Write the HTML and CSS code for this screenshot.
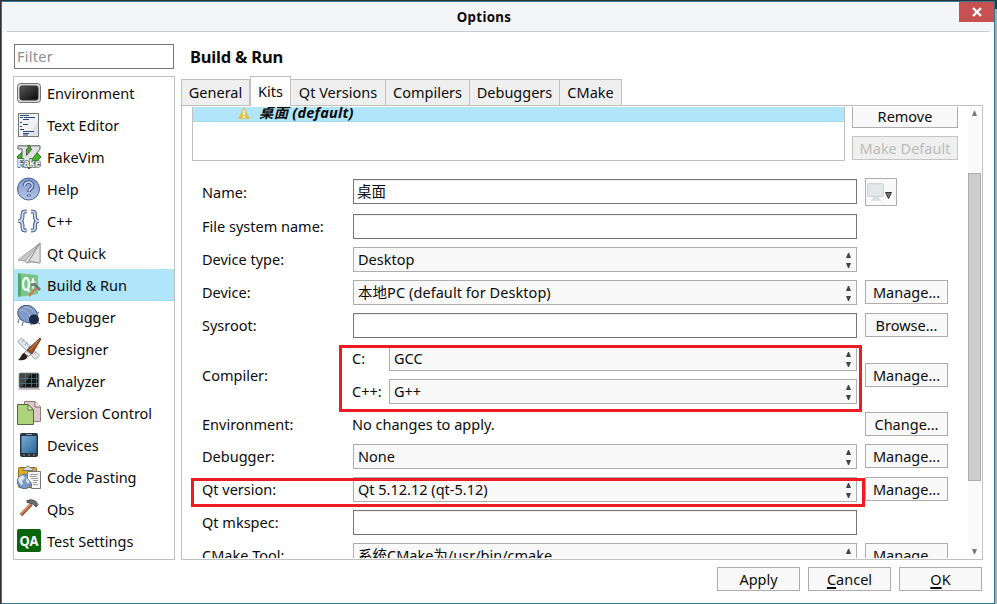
FILE: index.html
```html
<!DOCTYPE html>
<html lang="en">
<head>
<meta charset="utf-8">
<title>Options</title>
<link rel="stylesheet" href="styles.css">
</head>
<body>
<div class="window">
  <header class="titlebar">
    <h1 class="title">Options</h1>
    <button class="close" aria-label="Close"><svg width="10" height="10" viewBox="0 0 10 10"><path d="M1 1L9 9M9 1L1 9" stroke="#fff" stroke-width="2.4"/></svg></button>
  </header>
  <main class="content">
    <aside class="sidebar">
      <input class="filter" placeholder="Filter" aria-label="Filter">
      <ul class="categories">
        <li><svg viewBox="0 0 24 24"><defs><linearGradient id="scr" x1="0" y1="0" x2="1" y2="1"><stop offset="0" stop-color="#5a5a5a"/><stop offset=".5" stop-color="#303030"/><stop offset="1" stop-color="#080808"/></linearGradient></defs><rect x=".5" y="2.500" width="23" height="19" rx="3" fill="#d6d6d6" stroke="#747474"/><rect x="3" y="5" width="18" height="14" rx="2" fill="url(#scr)" stroke="#333"/></svg><span>Environment</span></li>
        <li><svg viewBox="0 0 24 24"><rect x="1.500" y=".5" width="20" height="23" fill="#eff1f2" stroke="#777"/><path d="M12 23L21 8V23z" fill="#dfe1e3"/><path d="M3 2.500h9M3 4.500h3M7 4.500h11M6 6.500h6M3 9.500h2M6 11.500h5M3 13.500h2M3 16.500h4M6 18.500h11M6 20.500h6M6 22h5" stroke="#29487e"/></svg><span>Text Editor</span></li>
        <li><svg viewBox="0 0 24 24"><path d="M12 0L24 12 12 24 0 12z" fill="#3bb822" stroke="#247717"/><path d="M1 .8h10v3.200H9.500v6.500L15 4h-1.500V.8H23V4L9 22H5V4H1z" fill="#dfe2e0" stroke="#5a5d5a"/><text x=".5" y="22" textLength="23" lengthAdjust="spacingAndGlyphs" class="fake">Fake</text></svg><span>FakeVim</span></li>
        <li><svg viewBox="0 0 24 24"><defs><linearGradient id="help" x1="0" y1="0" x2="0" y2="1"><stop offset="0" stop-color="#7f9bd1"/><stop offset="1" stop-color="#b4c4e6"/></linearGradient></defs><circle cx="11.500" cy="12" r="11" fill="url(#help)" stroke="#47618c"/><path d="M7.500 9C7.500 3.500 16 4 15.500 9c-.3 2.600-3.500 3-3.500 6M11.800 17.500v2" fill="none" stroke="#344e7c" stroke-width="3.600"/><path d="M7.500 9C7.500 3.500 16 4 15.500 9c-.3 2.600-3.500 3-3.500 5.500M11.800 17.700v1.500" fill="none" stroke="#c4d1e9" stroke-width="1.800"/></svg><span>Help</span></li>
        <li><svg viewBox="0 0 24 24"><g fill="none"><path id="braces" d="M9.500 2.500H8C5 2.500 5.500 5 5.500 8c0 2.500-1 4-4 4 3 0 4 1.500 4 4 0 3-.5 5.500 2.500 5.500h1.500M14 2.500h1.500c3 0 2.500 2.500 2.500 5.500 0 2.500 1 4 4 4-3 0-4 1.500-4 4 0 3 .5 5.500-2.500 5.500H14" stroke="#526a90" stroke-width="3.600"/><use href="#braces" class="brace-core"/><path d="M9.500 2.500H8C5 2.500 5.500 5 5.500 8c0 2.500-1 4-4 4 3 0 4 1.500 4 4 0 3-.5 5.500 2.500 5.500h1.500M14 2.500h1.500c3 0 2.500 2.500 2.500 5.500 0 2.500 1 4 4 4-3 0-4 1.500-4 4 0 3 .5 5.500-2.500 5.500H14" stroke="#d3e0f3" stroke-width="1.700"/></g></svg><span>C++</span></li>
        <li><svg viewBox="0 0 24 24"><path d="M23 2L1 19l7 1 2 2 4-1 9 1z" fill="#c9c9c9" stroke="#8e8e8e" stroke-width=".8"/><path d="M23 2L8 20l2 2 2-2zM12 20L23 2v20z" fill="#dfdfdf" stroke="#8d8d8d" stroke-width=".7"/></svg><span>Qt Quick</span></li>
        <li class="selected"><svg viewBox="0 0 24 24"><path d="M1 0l20 2v19L1 24z" fill="#7bc58b"/><path d="M1 0l3 2v20l-3 2z" fill="#51a865"/><ellipse cx="9" cy="11" rx="3" ry="6" fill="none" stroke="#f0fff2" stroke-width="2.300"/><path d="M10 15.500l2.500 3.500M16 5v9q0 1.500 1.500 1.500M14 9h4.500" fill="none" stroke="#f0fff2" stroke-width="1.900"/><path d="M12 23l8-9" stroke="#c77f58" stroke-width="2.600"/><path d="M14 12.500l3.500-1.500 5.500 6" fill="none" stroke="#6f7975" stroke-width="2.600"/></svg><span>Build &amp; Run</span></li>
        <li><svg viewBox="0 0 24 24"><path d="M2 14l-1 4M6 17l-1 4M20 9l2-2M20 17l3 2M13 18l2 2" stroke="#7b8190" stroke-width="1.200"/><ellipse cx="10.500" cy="9" rx="10" ry="8.300" transform="rotate(24 10.500 9)" fill="#7f99c8" stroke="#40567e"/><path d="M2 5q9-1 12 8M7 2q9 1 12 7" fill="none" stroke="#a9bbdc"/><circle cx="17" cy="14.500" r="5" fill="#1f2c47"/></svg><span>Debugger</span></li>
        <li><svg viewBox="0 0 24 24"><path d="M.5 4.500l4-3.500 18 17-4 4.500z" fill="#dee6eb" stroke="#9eacb5"/><path d="M5 5l2-2M8 8l2-2M11 11l2-2M17 17l2-2" stroke="#8b9ba8"/><path d="M23 1l1 1-9 15-5-4z" fill="#9b4f25" stroke="#5f2d12" stroke-width=".8"/><path d="M22 3l-9 10" stroke="#d48a58"/><path d="M14 17l-4.500-3.500-2.500 3 4.500 3z" fill="#e4e4e4" stroke="#666" stroke-width=".8"/><path d="M7 16c-3 1-3 5-6 7 5 1 9 0 9.500-4z" fill="#2b211c"/></svg><span>Designer</span></li>
        <li><svg viewBox="0 0 24 24"><path d="M2 18l20 0 1 3H1z" fill="#c4c4c4"/><rect x="2" y="4" width="20" height="15" rx="1.500" fill="#10171a" stroke="#a8a8a8"/><path d="M3 5h11L5 18H3z" fill="#424749"/><path d="M8.500 5v13M14.500 5v13M3 9.500h18M3 14.500h18M19.500 5v13" stroke="#56808a" stroke-width=".7"/></svg><span>Analyzer</span></li>
        <li><svg viewBox="0 0 24 24"><path d="M7.500.5H18l5.500 5.500v14.500h-16z" fill="#ddc7ca" stroke="#8d7b7d"/><path d="M18 .5V6h5.500" fill="#f6eeee" stroke="#806e70"/><path d="M.5 3.500H11l5.500 5.500v14.500H.5z" fill="#add27c" stroke="#536b3b"/><path d="M11 3.500V9h5.500z" fill="#e7f5d2" stroke="#526a3a"/></svg><span>Version Control</span></li>
        <li><svg viewBox="0 0 24 24"><defs><linearGradient id="dev" x1="0" y1="0" x2="1" y2="1"><stop offset="0" stop-color="#75add5"/><stop offset="1" stop-color="#2c649a"/></linearGradient></defs><rect x="3" y="0" width="18" height="24" rx="2" fill="#2b3540"/><rect x="4.500" y="3" width="15" height="17" fill="url(#dev)"/><path d="M9 1.500h6M6 22h2M11 22h2M16 22h2" stroke="#929ca5"/></svg><span>Devices</span></li>
        <li><svg viewBox="0 0 24 24"><rect x="1.500" y="2.500" width="18" height="20" rx="1" fill="#dcae20" stroke="#8d6c13"/><path d="M4 9h13v11H4z" fill="#f3f4f6"/><path d="M6 5.500V3h2.500q2.500-4 5 0H16v2.500z" fill="#ddd" stroke="#777"/><circle cx="7.500" cy="16.500" r="7.200" fill="#7799c6" stroke="#526d97"/><path d="M2 12l4-2 2 3-3 3 1 3-2 1-3-5zM10 11l4 3-3 5-2-3z" fill="#dce7f2"/><path d="M10.500 6.500h13v17h-9v-5l-4-5z" fill="#f4f4f4" stroke="#777"/><path d="M13 9.500h8M13 11.500h7M14 13.500h7M16 15.500h5M16 17.500h4M16 19.500h5" stroke="#888" stroke-width=".8"/></svg><span>Code Pasting</span></li>
        <li><svg viewBox="0 0 24 24"><path d="M4 18L14.500 7" stroke="#9a5c34" stroke-width="3.500"/><path d="M4 17L14.500 6" stroke="#dd9360" stroke-width="1.500"/><path d="M10 3.500q5-2 9 1l2 3-2 2.500-3-3-3-1-3-.500z" fill="#697070" stroke="#303838" stroke-width=".8"/></svg><span>Qbs</span></li>
        <li><svg viewBox="0 0 24 24"><rect x="0" y="0" width="24" height="23" rx="2" fill="#07650c"/><text x="2.500" y="16.500" textLength="19" lengthAdjust="spacingAndGlyphs" class="qa">QA</text></svg><span>Test Settings</span></li>
      </ul>
    </aside>
    <section class="page">
      <h2 class="heading">Build &amp; Run</h2>
      <nav class="tabs">
        <span class="tab general">General</span><span class="tab active">Kits</span><span class="tab versions">Qt Versions</span><span class="tab compilers">Compilers</span><span class="tab debuggers">Debuggers</span><span class="tab cmake">CMake</span>
      </nav>
      <div class="panel">
        <div class="viewport">
          <div class="kits">
            <div class="tree"><div class="kit"><svg width="12" height="12" viewBox="0 0 12 12"><path d="M6 0L12 12H0z" fill="#e1c456"/><path d="M6 3.500v4.500M6 9v2" stroke="#fff" stroke-width="1.600"/></svg><span>桌面 (default)</span></div></div>
            <div class="kit-actions"><button class="btn remove">Remove</button><button class="btn" disabled>Make Default</button></div>
          </div>
          <div class="form">
            <label class="name-label">Name:</label><div class="input named">桌面</div><button class="icon-btn" aria-label="Kit icon"><svg width="28" height="24" viewBox="0 0 28 24"><rect x="1.500" y="3.500" width="16" height="13" rx="1" fill="#dfe2e2" stroke="#d4d7d7"/><path d="M3 5h13v10H3z" fill="#e5e8e8"/><path d="M7 17h6l2 4H5z" fill="#dfe1e1"/><path d="M19.500 12.500h6l-3 6z" fill="#777" stroke="#333"/></svg></button>
            <label>File system name:</label><div class="input"></div><i></i>
            <label>Device type:</label><div class="combo"><span>Desktop</span><b class="spin"></b></div><i></i>
            <label>Device:</label><div class="combo"><span class="device">本地PC (default for Desktop)</span><b class="spin"></b></div><button class="btn">Manage...</button>
            <label>Sysroot:</label><div class="input"></div><button class="btn">Browse...</button>
            <label class="mid">Compiler:</label>
            <div class="compiler"><label>C:</label><div class="combo"><span>GCC</span><b class="spin"></b></div><label>C++:</label><div class="combo"><span>G++</span><b class="spin"></b></div></div>
            <button class="btn mid">Manage...</button>
            <label>Environment:</label><span class="value">No changes to apply.</span><button class="btn">Change...</button>
            <label>Debugger:</label><div class="combo"><span>None</span><b class="spin"></b></div><button class="btn">Manage...</button>
            <label>Qt version:</label><div class="combo"><span>Qt 5.12.12 (qt-5.12)</span><b class="spin"></b></div><button class="btn">Manage...</button>
            <label>Qt mkspec:</label><div class="input"></div><i></i>
            <label>CMake Tool:</label><div class="combo"><span>系统CMake为/usr/bin/cmake</span><b class="spin"></b></div><button class="btn">Manage...</button>
          </div>
        </div>
        <div class="scrollbar"><b class="arrow up"></b><div class="track"><div class="thumb"></div></div><b class="arrow down"></b></div>
      </div>
    </section>
  </main>
  <footer class="actions"><button class="btn">Apply</button><button class="btn"><u>C</u>ancel</button><button class="btn"><u>O</u>K</button></footer>
  <div class="mark mark-compiler"></div>
  <div class="mark mark-version"></div>
</div>
</body>
</html>
```
FILE: styles.css
```css
* { box-sizing: border-box; }
body {
  margin: 0; width: 997px; height: 604px; overflow: hidden;
  padding: 1px 2px 0 1px;
  background: linear-gradient(#333 9px, #aaa 9px) right / 2px 100% no-repeat, #303336;
  font: 14.5px/20px "Noto Sans", "Noto Sans CJK SC", sans-serif; color: #0c0c0c;
}
h1, h2, ul { margin: 0; padding: 0; }
button, input { font: inherit; color: inherit; border-radius: 0; margin: 0; padding: 0; }
.window { position: relative; width: 994px; height: 603px; border: 1px solid #317797; background: #fff; }
.titlebar { display: flex; height: 30px; background: linear-gradient(#c8c9cc, #c8c9cc) 5px 29px / 982px 1px no-repeat #f4f5f8; }
.title { flex: 1; padding-left: 7px; text-align: center; font-size: 13.3px; line-height: 31px; font-weight: 700; letter-spacing: .3px; }
.close { width: 35px; height: 20px; border: 0; background: #c75050; display: flex; align-items: center; justify-content: center; }
.content { display: flex; gap: 6px; height: 528px; padding: 12px 0 0 11px; }
.sidebar { width: 162px; }
.filter { display: block; width: 160px; height: 25px; margin-left: 1px; border: 1px solid #777; padding: 0 2px 2px; outline: 0; background: #fff; letter-spacing: .25px; }
.filter::placeholder { color: #8e8e8e; opacity: 1; }
.categories { margin-top: 7px; height: 484px; border: 1px solid #c0c0c0; list-style: none; }
.categories li { display: flex; align-items: center; height: 32px; padding-left: 3px; gap: 6px; }
.categories li.selected { background: #b0e5fa; border-bottom: 1px solid #9edcf5; }
.categories svg { width: 24px; height: 24px; flex: none; }
.fake { font: 700 10px "Liberation Sans", sans-serif; fill: #fff; stroke: #555; stroke-width: 1.3px; paint-order: stroke; }
.qa { font: 700 15px "Noto Sans", sans-serif; fill: #fff; }
.page { width: 802px; }
.heading { height: 32px; padding-left: 9px; font-size: 16.5px; line-height: 26px; letter-spacing: -.2px; }
.tabs { display: flex; align-items: flex-end; height: 29px; }
.tab { height: 26px; border: 1px solid #c0c0c0; border-left: 0; border-bottom: 0; background: #efefef; text-align: center; line-height: 25px; white-space: nowrap; }
.general { width: 69px; border-left: 1px solid #c0c0c0; }
.active { width: 41px; height: 30px; margin-bottom: -1px; border-left: 1px solid #c0c0c0; background: #fff; line-height: 28px; position: relative; }
.versions { width: 95px; }
.compilers { width: 84px; }
.debuggers { width: 90px; }
.cmake { width: 62px; }
.panel { display: flex; height: 455px; border: 1px solid #c0c0c0; padding: 1px; }
.viewport { width: 785px; height: 451px; overflow: hidden; }
.kits { display: flex; gap: 7px; height: 71px; padding-left: 9px; }
.tree { width: 653px; height: 54px; border: 1px solid #c0c0c0; border-top: 0; }
.kit { display: flex; align-items: flex-start; gap: 9px; height: 15px; padding-left: 45px; background: #b0e5fa; border-bottom: 1px solid #9edcf5; font-weight: 700; font-style: italic; line-height: 10px; }
.kit span { letter-spacing: .2px; }
.kit-actions { width: 106px; display: flex; flex-direction: column; gap: 8px; }
.btn { height: 24px; border: 1px solid #adadad; background: #f9f9f9; text-align: center; line-height: 22px; white-space: nowrap; }
.btn:disabled { border-color: #c6c6c6; background: #efefef; color: #bcbcbc; }
.remove { height: 21px; border-top: 0; padding-bottom: 2px; line-height: 18px; }
.form { display: grid; grid-template-columns: 143px 504px 83px; gap: 8px; padding-left: 19px; line-height: 25px; }
.form label { white-space: nowrap; }
.form .name-label { padding-top: 2px; height: 28px; }
.input { height: 25px; border: 1px solid #767676; background: #fff; padding-left: 3px; line-height: 23px; box-shadow: inset 0 1px #eee; }
.named { margin-top: 1px; }
.icon-btn { width: 32px; height: 28px; border: 1px solid #adadad; background: #f9f9f9; }
.icon-btn svg { display: block; }
.combo { display: flex; justify-content: space-between; height: 25px; border: 1px solid #adadad; background: #f9f9f9; padding: 0 5px 0 4px; line-height: 22px; }
.device { letter-spacing: .06px; }
.spin { width: 7px; height: 23px; padding-top: 5px; display: flex; flex-direction: column; gap: 5px; }
.spin::before, .spin::after { content: ""; width: 5px; height: 5px; background: #444; clip-path: polygon(40% 0, 60% 0, 100% 100%, 0 100%); }
.spin::after { clip-path: polygon(0 0, 100% 0, 60% 100%, 40% 100%); }
.combo .spin { width: 5px; }
.mid { align-self: center; }
.compiler { display: grid; grid-template-columns: 28px 1fr; gap: 8px; line-height: 25px; }
.compiler label { margin-left: -1px; }
.value { margin-left: -1px; line-height: 25px; height: 24px; }
.form > label:nth-of-type(7) { height: 24px; }
.scrollbar { width: 13px; height: 451px; display: flex; flex-direction: column; align-items: center; }
.track { width: 13px; flex: 1; padding-top: 53px; background: #fafafa; }
.thumb { height: 308px; border: 1px solid #adadad; background: #cdcdcd; }
.arrow { height: 13px; width: 5px; padding-top: 4px; }
.arrow::before { content: ""; display: block; width: 5px; height: 5px; background: #777; clip-path: polygon(40% 0, 60% 0, 100% 100%, 0 100%); }
.down::before { clip-path: polygon(0 0, 100% 0, 60% 100%, 40% 100%); }
.actions { display: flex; justify-content: flex-end; gap: 8px; padding: 7px 12px 0 0; }
.actions .btn { width: 83px; }
.actions u { text-decoration-thickness: 2px; text-underline-offset: 2px; text-decoration-skip-ink: none; }
.mark { position: absolute; border: 3px solid #ed1c24; }
.mark-compiler { left: 337px; top: 343px; width: 523px; height: 67px; }
.mark-version { left: 189px; top: 476px; width: 674px; height: 29px; }
```
